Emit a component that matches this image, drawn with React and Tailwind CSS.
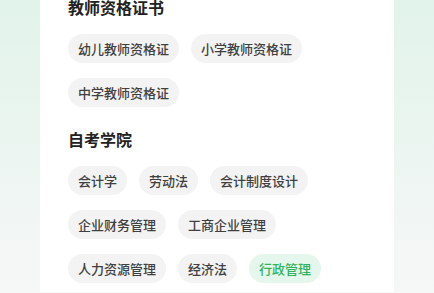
import React from "react";

const sections = [
  {
    title: "教师资格证书",
    tags: ["幼儿教师资格证", "小学教师资格证", "中学教师资格证"],
  },
  {
    title: "自考学院",
    tags: [
      "会计学",
      "劳动法",
      "会计制度设计",
      "企业财务管理",
      "工商企业管理",
      "人力资源管理",
      "经济法",
      "行政管理",
    ],
  },
];

const active = "行政管理";

function Tag({ label }) {
  const on = label === active;
  return (
    <span
      className={
        "h-[29px] px-[10px] rounded-full text-[13px] leading-[29px] font-medium " +
        (on ? "bg-[#e5f6ec] text-[#2eb360]" : "bg-[#f3f3f4] text-[#404040]")
      }
    >
      {label}
    </span>
  );
}

export default function App() {
  return (
    <div
      className="h-[293px] w-[434px] overflow-hidden bg-gradient-to-b from-[#e1f3ea] to-[#f6f7f7]"
      style={{ fontFamily: '"Noto Sans CJK SC", "Noto Sans", sans-serif' }}
    >
      <div className="mx-[40px] h-full bg-white pl-[28px] pr-4">
        {sections.map((s, i) => (
          <div key={s.title} className={i === 0 ? "-mt-[1px]" : "mt-[24px]"}>
            <h2 className="text-[16px] leading-[16px] font-bold text-[#222]">{s.title}</h2>
            <div className="mt-[19px] flex flex-wrap gap-x-3 gap-y-[15px]">
              {s.tags.map((t) => (
                <Tag key={t} label={t} />
              ))}
            </div>
          </div>
        ))}
      </div>
    </div>
  );
}
